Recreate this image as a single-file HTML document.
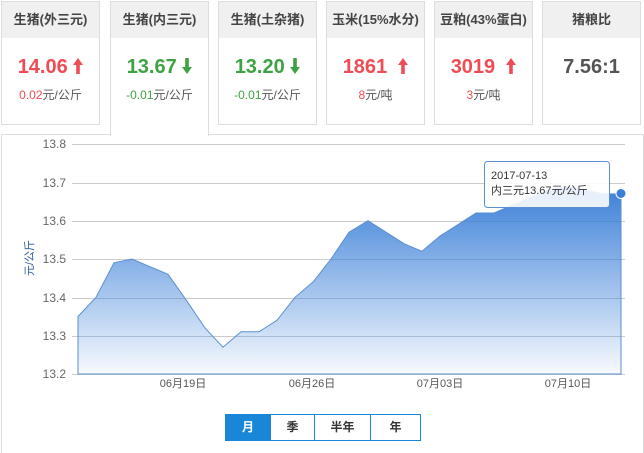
<!DOCTYPE html>
<html><head><meta charset="utf-8"><style>
*{margin:0;padding:0;box-sizing:border-box}
body{width:644px;height:453px;background:#fff;font-family:"Liberation Sans","Noto Sans CJK SC",sans-serif;position:relative;overflow:hidden}
.card{position:absolute;top:1px;width:99px;height:124px;border:1px solid #ddd;background:#fff;text-align:center}
.card .h{height:36px;background:#f0f0f0;line-height:36px;font-size:13px;color:#444;font-weight:bold}
.card .v{font-size:20px;font-weight:bold;margin-top:16px;line-height:26px}
.card .s{font-size:12px;color:#555;margin-top:6px}
.red{color:#ef4c55}.green{color:#3ea243}
.active{height:135px;border-bottom:none;z-index:2}
.panel{position:absolute;left:1px;top:134px;width:643px;height:319px;border:1px solid #ddd;border-bottom:none}
.btns{position:absolute;left:225px;top:414px;display:flex;border:1px solid #1a86d8;height:27px}
.btns div{height:25px;line-height:25px;text-align:center;font-size:12px;font-weight:bold;color:#333;border-left:1px solid #1a86d8}
svg.ar{vertical-align:-1px}
</style></head><body>
<div class="card" style="left:1px"><div class="h">生猪(外三元)</div><div class="v red">14.06 <svg class="ar" width="10" height="16" viewBox="0 0 10 16"><path d="M5 0L10 7H6.8V16H3.2V7H0Z" fill="#ef4c55"/></svg></div><div class="s"><span class="red">0.02</span>元/公斤</div></div>
<div class="card active" style="left:110px"><div class="h">生猪(内三元)</div><div class="v green">13.67 <svg class="ar" width="10" height="16" viewBox="0 0 10 16"><path d="M5 16L10 9H6.8V0H3.2V9H0Z" fill="#3ea243"/></svg></div><div class="s"><span class="green">-0.01</span>元/公斤</div></div>
<div class="card" style="left:218px"><div class="h">生猪(土杂猪)</div><div class="v green">13.20 <svg class="ar" width="10" height="16" viewBox="0 0 10 16"><path d="M5 16L10 9H6.8V0H3.2V9H0Z" fill="#3ea243"/></svg></div><div class="s"><span class="green">-0.01</span>元/公斤</div></div>
<div class="card" style="left:326px"><div class="h">玉米(15%水分)</div><div class="v red">1861 &nbsp;<svg class="ar" width="10" height="16" viewBox="0 0 10 16"><path d="M5 0L10 7H6.8V16H3.2V7H0Z" fill="#ef4c55"/></svg></div><div class="s"><span class="red">8</span>元/吨</div></div>
<div class="card" style="left:434px"><div class="h">豆粕(43%蛋白)</div><div class="v red">3019 &nbsp;<svg class="ar" width="10" height="16" viewBox="0 0 10 16"><path d="M5 0L10 7H6.8V16H3.2V7H0Z" fill="#ef4c55"/></svg></div><div class="s"><span class="red">3</span>元/吨</div></div>
<div class="card" style="left:542px"><div class="h">猪粮比</div><div class="v" style="color:#555">7.56:1</div></div>
<div class="panel"></div>
<svg style="position:absolute;left:0;top:0" width="644" height="453">
<defs><linearGradient id="g" x1="0" y1="0" x2="0" y2="1"><stop offset="0" stop-color="#3a7fd8"/><stop offset="1" stop-color="#3a7fd8" stop-opacity="0.04"/></linearGradient></defs>
<g stroke="#ccc" stroke-width="1">
<line x1="72" y1="144.5" x2="625" y2="144.5"/><line x1="72" y1="183.5" x2="625" y2="183.5"/><line x1="72" y1="221.5" x2="625" y2="221.5"/><line x1="72" y1="259.5" x2="625" y2="259.5"/><line x1="72" y1="298.5" x2="625" y2="298.5"/><line x1="72" y1="336.5" x2="625" y2="336.5"/><line x1="72" y1="374.5" x2="625" y2="374.5"/>
</g>
<path d="M78,316.5 L96,297.3 L114,262.8 L132,259 L150,266.7 L168,274.3 L187,301.2 L205,328 L223,347.2 L241,331.8 L259,331.8 L277,320.3 L295,297.3 L313,282 L331,259 L349,232.2 L368,220.7 L386,232.2 L404,243.7 L422,251.3 L440,236 L458,224.5 L476,213 L494,213 L512,205.3 L530,197.7 L549,190 L567,186.2 L585,190 L603,193.9 L621,193.9 L621,374 L78,374 Z" fill="url(#g)" stroke="#5b8fd0" stroke-width="1"/>
<circle cx="621" cy="193.5" r="5" fill="#3a7fd8" stroke="#fff" stroke-width="1"/>
<g font-size="12" fill="#666" text-anchor="end">
<text x="66" y="148">13.8</text><text x="66" y="187">13.7</text><text x="66" y="225">13.6</text><text x="66" y="263">13.5</text><text x="66" y="302">13.4</text><text x="66" y="340">13.3</text><text x="66" y="378">13.2</text>
</g>
<g font-size="11" fill="#555" text-anchor="middle">
<text x="183" y="387">06月19日</text><text x="312" y="387">06月26日</text><text x="440" y="387">07月03日</text><text x="568" y="387">07月10日</text>
</g>
<text transform="translate(33,258) rotate(-90)" font-size="11" fill="#2e5a9a" text-anchor="middle">元/公斤</text>
<rect x="484.5" y="161.5" width="125" height="46" rx="3" fill="rgba(255,255,255,0.88)" stroke="#5b8fd0"/>
<text x="491" y="179" font-size="11" fill="#333">2017-07-13</text>
<text x="491" y="194" font-size="11" fill="#333">内三元13.67元/公斤</text>
</svg>
<div class="btns"><div style="width:44px;background:#1a86d8;color:#fff;border-left:none">月</div><div style="width:44px">季</div><div style="width:56px">半年</div><div style="width:50px">年</div></div>
</body></html>
